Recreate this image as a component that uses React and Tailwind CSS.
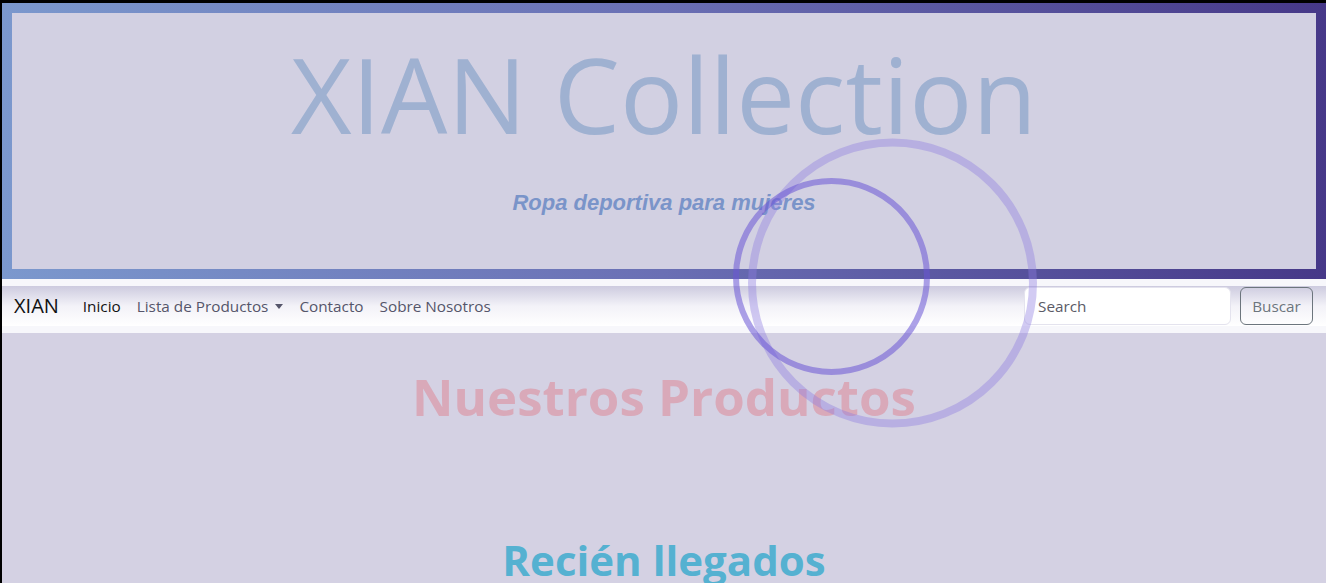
import React from "react";

export default function App() {
  const navFont = { fontFamily: '"Open Sans", "Noto Sans", sans-serif' };
  return (
    <div className="relative min-h-[583px] bg-black pt-[3px] pl-[2px] overflow-hidden">
      <div className="bg-[#d4d1e3] min-h-[580px]">
        {/* Header */}
        <header className="p-[10px] bg-gradient-to-r from-[#7b98cd] via-[#6a6fb4] to-[#463888]">
          <div className="bg-[#d2d0e2] h-[256px] flex flex-col items-center">
            <h1
              className="text-[105px] leading-none text-[#9fb1d1] mt-[28px]"
              style={{ fontFamily: '"Open Sans", sans-serif' }}
            >
              XIAN Collection
            </h1>
            <p
              className="mt-[40px] text-[22px] font-bold italic text-[#7a94c9]"
              style={{ fontFamily: '"Liberation Sans", Arial, sans-serif' }}
            >
              Ropa deportiva para mujeres
            </p>
          </div>
        </header>

        {/* Navbar */}
        <nav className="bg-[#f7f7fb] py-[7px]" style={navFont}>
          <div className="flex items-center h-[40px] pl-[12px] pr-[13px] bg-gradient-to-b from-[#cdcbdf] via-[#f3f2f8] to-[#ffffff]">
            <span className="text-[20px] text-[#111] mr-[16px]">XIAN</span>
            <ul className="flex items-center text-[15.3px]">
              <li className="px-2 text-[#111]">Inicio</li>
              <li className="px-2 text-[#55556a] flex items-center">
                Lista de Productos
                <span className="ml-[7px] inline-block w-0 h-0 border-l-[4px] border-r-[4px] border-t-[5px] border-l-transparent border-r-transparent border-t-[#55556a]" />
              </li>
              <li className="px-2 text-[#55556a]">Contacto</li>
              <li className="px-2 text-[#55556a]">Sobre Nosotros</li>
            </ul>
            <div className="ml-auto flex items-center gap-[9px]">
              <div className="w-[207px] h-[38px] bg-white rounded-[6px] border border-[#e4e3ee] flex items-center pl-[13px] text-[15.3px] text-[#5a5a66]">
                Search
              </div>
              <div className="h-[38px] w-[73px] rounded-[6px] border border-[#6c757d] flex items-center justify-center text-[15.3px] text-[#6c757d]">
                Buscar
              </div>
            </div>
          </div>
        </nav>

        {/* Content */}
        <main className="flex flex-col items-center">
          <h2
            className="mt-[38px] text-[51px] font-bold leading-none text-[#d9a9b9]"
            style={navFont}
          >
            Nuestros Productos
          </h2>
          <h2
            className="mt-[117px] text-[42px] font-bold leading-none text-[#55b1d1]"
            style={navFont}
          >
            Recién llegados
          </h2>
        </main>
      </div>

      {/* Decorative circles */}
      <svg
        className="absolute left-0 top-0 pointer-events-none"
        width="1326"
        height="583"
        viewBox="0 0 1326 583"
      >
        <circle cx="892.5" cy="283" r="140.5" fill="none" stroke="#8f7ee0" strokeOpacity="0.4" strokeWidth="8" />
        <circle cx="831.5" cy="276.5" r="95.5" fill="none" stroke="#6a55d6" strokeOpacity="0.55" strokeWidth="6" />
      </svg>
    </div>
  );
}
